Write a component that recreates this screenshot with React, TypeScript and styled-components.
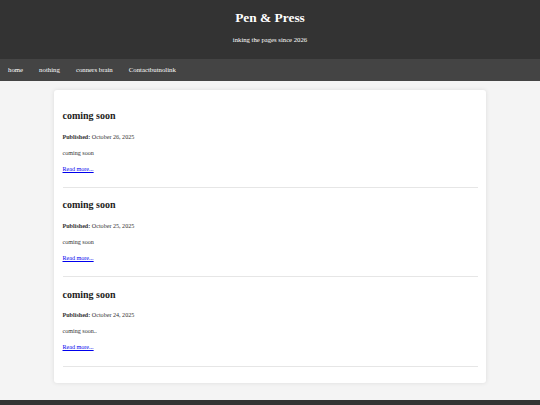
import styled, { createGlobalStyle } from 'styled-components';

const GlobalStyle = createGlobalStyle`
  html, body {
    margin: 0;
    padding: 0;
    background: #f4f4f4;
    font-family: "Liberation Serif", "Times New Roman", serif;
    color: #333;
  }
`;

const Header = styled.header`
  box-sizing: border-box;
  height: 59.3px;
  padding-top: 10.2px;
  background: #333;
  color: #fff;
  text-align: center;

  & > h1 {
    margin: 0;
    font-size: 13.4px;
    line-height: 16px;
    font-weight: bold;
  }

  & > p {
    margin: 9.8px 0 0;
    font-size: 6.7px;
    line-height: 8px;
  }
`;

const Nav = styled.nav`
  display: flex;
  align-items: center;
  height: 21.7px;
  background: #444;
`;

const NavLink = styled.a`
  padding: 0 8px;
  color: #fff;
  font-size: 6.8px;
  line-height: 8px;
  text-decoration: none;
`;

const Main = styled.main`
  box-sizing: border-box;
  width: 432px;
  margin: 9px auto 16.5px;
  padding: 8.5px 8.5px 16.5px;
  background: #fff;
  border-radius: 3px;
  box-shadow: 0 0 4px rgba(0, 0, 0, 0.1);
`;

const Post = styled.article`
  padding-bottom: 14.2px;
  border-bottom: 1px solid #e6e6e6;
`;

const Title = styled.h2`
  margin: 11.5px 0 0;
  font-size: 10px;
  line-height: 12px;
  font-weight: bold;
  color: #222;
`;

const Line = styled.p<{ $gap: number }>`
  margin: ${(p) => p.$gap}px 0 0;
  font-size: 6.1px;
  line-height: 8px;

  & > a {
    color: #0000ee;
  }
`;

const Footer = styled.footer`
  height: 40px;
  background: #333;
`;

const posts = [
  { date: 'October 26, 2025', text: 'coming soon' },
  { date: 'October 25, 2025', text: 'coming soon' },
  { date: 'October 24, 2025', text: 'coming soon..' },
];

export default function App() {
  return (
    <>
      <GlobalStyle />
      <Header>
        <h1>Pen &amp; Press</h1>
        <p>inking the pages since 2026</p>
      </Header>
      <Nav>
        <NavLink href="#">home</NavLink>
        <NavLink href="#">nothing</NavLink>
        <NavLink href="#">conners brain</NavLink>
        <NavLink href="#">Contactbutnolink</NavLink>
      </Nav>
      <Main>
        {posts.map((post) => (
          <Post key={post.date}>
            <Title>coming soon</Title>
            <Line $gap={10.7}>
              <strong>Published:</strong> {post.date}
            </Line>
            <Line $gap={8}>{post.text}</Line>
            <Line $gap={8}>
              <a href="#">Read more...</a>
            </Line>
          </Post>
        ))}
      </Main>
      <Footer />
    </>
  );
}
